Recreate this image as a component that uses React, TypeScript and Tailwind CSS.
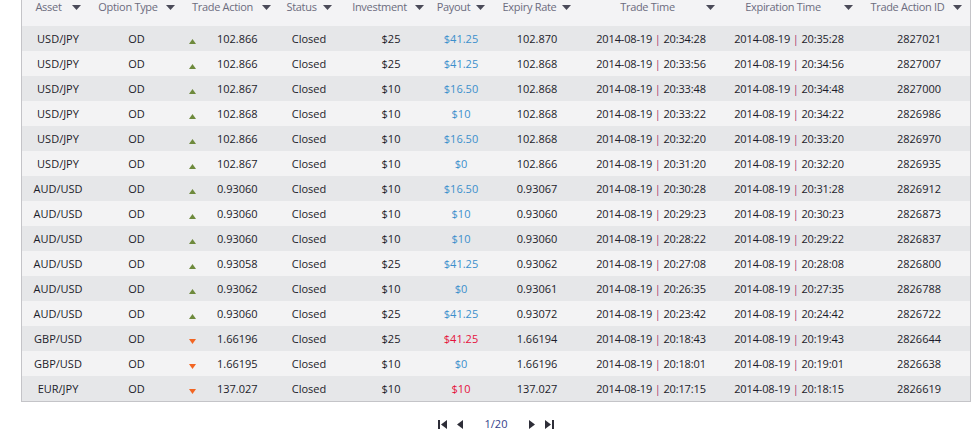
import React from "react";

type Trade = {
  asset: string;
  up: boolean;
  action: string;
  investment: string;
  payout: string;
  win: boolean;
  expiry: string;
  tradeTime: string;
  expTime: string;
  id: string;
};

const rows: Trade[] = [
  { asset: "USD/JPY", up: true, action: "102.866", investment: "$25", payout: "$41.25", win: true, expiry: "102.870", tradeTime: "20:34:28", expTime: "20:35:28", id: "2827021" },
  { asset: "USD/JPY", up: true, action: "102.866", investment: "$25", payout: "$41.25", win: true, expiry: "102.868", tradeTime: "20:33:56", expTime: "20:34:56", id: "2827007" },
  { asset: "USD/JPY", up: true, action: "102.867", investment: "$10", payout: "$16.50", win: true, expiry: "102.868", tradeTime: "20:33:48", expTime: "20:34:48", id: "2827000" },
  { asset: "USD/JPY", up: true, action: "102.868", investment: "$10", payout: "$10", win: true, expiry: "102.868", tradeTime: "20:33:22", expTime: "20:34:22", id: "2826986" },
  { asset: "USD/JPY", up: true, action: "102.866", investment: "$10", payout: "$16.50", win: true, expiry: "102.868", tradeTime: "20:32:20", expTime: "20:33:20", id: "2826970" },
  { asset: "USD/JPY", up: true, action: "102.867", investment: "$10", payout: "$0", win: true, expiry: "102.866", tradeTime: "20:31:20", expTime: "20:32:20", id: "2826935" },
  { asset: "AUD/USD", up: true, action: "0.93060", investment: "$10", payout: "$16.50", win: true, expiry: "0.93067", tradeTime: "20:30:28", expTime: "20:31:28", id: "2826912" },
  { asset: "AUD/USD", up: true, action: "0.93060", investment: "$10", payout: "$10", win: true, expiry: "0.93060", tradeTime: "20:29:23", expTime: "20:30:23", id: "2826873" },
  { asset: "AUD/USD", up: true, action: "0.93060", investment: "$10", payout: "$10", win: true, expiry: "0.93060", tradeTime: "20:28:22", expTime: "20:29:22", id: "2826837" },
  { asset: "AUD/USD", up: true, action: "0.93058", investment: "$25", payout: "$41.25", win: true, expiry: "0.93062", tradeTime: "20:27:08", expTime: "20:28:08", id: "2826800" },
  { asset: "AUD/USD", up: true, action: "0.93062", investment: "$10", payout: "$0", win: true, expiry: "0.93061", tradeTime: "20:26:35", expTime: "20:27:35", id: "2826788" },
  { asset: "AUD/USD", up: true, action: "0.93060", investment: "$25", payout: "$41.25", win: true, expiry: "0.93072", tradeTime: "20:23:42", expTime: "20:24:42", id: "2826722" },
  { asset: "GBP/USD", up: false, action: "1.66196", investment: "$25", payout: "$41.25", win: false, expiry: "1.66194", tradeTime: "20:18:43", expTime: "20:19:43", id: "2826644" },
  { asset: "GBP/USD", up: false, action: "1.66195", investment: "$10", payout: "$0", win: true, expiry: "1.66196", tradeTime: "20:18:01", expTime: "20:19:01", id: "2826638" },
  { asset: "EUR/JPY", up: false, action: "137.027", investment: "$10", payout: "$10", win: false, expiry: "137.027", tradeTime: "20:17:15", expTime: "20:18:15", id: "2826619" },
];

function SortArrow() {
  return (
    <svg width="9" height="5" viewBox="0 0 9 5" className="shrink-0">
      <path d="M0 0h9L4.5 5z" fill="#4a4a58" />
    </svg>
  );
}

function HeaderCell({ label, className }: { label: string; className: string }) {
  return (
    <div className={`flex h-[15px] items-center justify-center whitespace-nowrap ${className}`}>
      <span>{label}</span>
      <SortArrow />
    </div>
  );
}

function DateTime({ time }: { time: string }) {
  return (
    <span className="tracking-[-0.15px]">
      2014-08-19 <span className="text-[#a8336e]">|</span> {time}
    </span>
  );
}

function PagerIcon({ d }: { d: string }) {
  return (
    <svg width="9" height="9" viewBox="0 0 9 9" className="block">
      <path d={d} fill="#2e2e38" />
    </svg>
  );
}

export default function App() {
  return (
    <div
      className="h-[432px] w-[980px] overflow-hidden bg-white text-[11px] text-[#1c1c2a]"
      style={{ fontFamily: '"Open Sans", "Noto Sans", sans-serif' }}
    >
      <div className="ml-[21px] w-[950px] border-x border-b border-[#c4c4c8]">
        <div className="flex h-[26px] bg-[#f3f3f5] tracking-[-0.3px] text-[#6c6c7e]">
          <HeaderCell label="Asset" className="w-[72px] gap-[10px]" />
          <HeaderCell label="Option Type" className="w-[85px] gap-[8px]" />
          <HeaderCell label="Trade Action" className="w-[87px] gap-[9px] pl-[18px]" />
          <HeaderCell label="Status" className="w-[86px] gap-[6px]" />
          <HeaderCell label="Investment" className="w-[78px] gap-[8px] pr-[6px]" />
          <HeaderCell label="Payout" className="w-[62px] gap-[6px]" />
          <HeaderCell label="Expiry Rate" className="w-[90px] gap-[6px]" />
          <HeaderCell label="Trade Time" className="w-[138px] gap-[31px] pl-[33px]" />
          <HeaderCell label="Expiration Time" className="w-[138px] gap-[23px] pl-[20px]" />
          <HeaderCell label="Trade Action ID" className="w-[112px] gap-[8px] pl-[4px]" />
        </div>
        {rows.map((r, i) => (
          <div
            key={r.id}
            className={`flex h-[25px] items-center pt-[1px] ${i % 2 === 0 ? "bg-[#e6e7e9]" : "bg-[#f3f3f4]"}`}
          >
            <div className="w-[72px] text-center">{r.asset}</div>
            <div className="w-[85px] text-center">OD</div>
            <div className="flex w-[87px] items-center pl-[10px]">
              <svg width="7" height="5" viewBox="0 0 7 5" className="mt-[4px] shrink-0">
                {r.up ? (
                  <path d="M3.5 0L7 5H0z" fill="#6e8a3c" />
                ) : (
                  <path d="M0 0h7L3.5 5z" fill="#f26522" />
                )}
              </svg>
              <span className="ml-[21px]">{r.action}</span>
            </div>
            <div className="w-[86px] text-center">Closed</div>
            <div className="w-[78px] text-center">{r.investment}</div>
            <div className={`w-[62px] text-center ${r.win ? "text-[#3b8fcc]" : "text-[#e5123d]"}`}>
              {r.payout}
            </div>
            <div className="w-[90px] text-center">{r.expiry}</div>
            <div className="w-[138px] text-center">
              <DateTime time={r.tradeTime} />
            </div>
            <div className="w-[138px] text-center">
              <DateTime time={r.expTime} />
            </div>
            <div className="w-[112px] pl-[10px] text-center">{r.id}</div>
          </div>
        ))}
      </div>
      <div className="mt-[13px] flex h-[18px] items-center justify-center pl-[12px]">
        <PagerIcon d="M0 0h2v9H0zM9 0v9L3 4.5z" />
        <span className="ml-[9px]">
          <PagerIcon d="M7 0v9L1 4.5z" />
        </span>
        <span className="ml-[20px] leading-[18px] text-[#33418a]">1/20</span>
        <span className="ml-[20px]">
          <PagerIcon d="M2 0v9l6-4.5z" />
        </span>
        <span className="ml-[9px]">
          <PagerIcon d="M0 0v9l6-4.5zM7 0h2v9H7z" />
        </span>
      </div>
    </div>
  );
}
